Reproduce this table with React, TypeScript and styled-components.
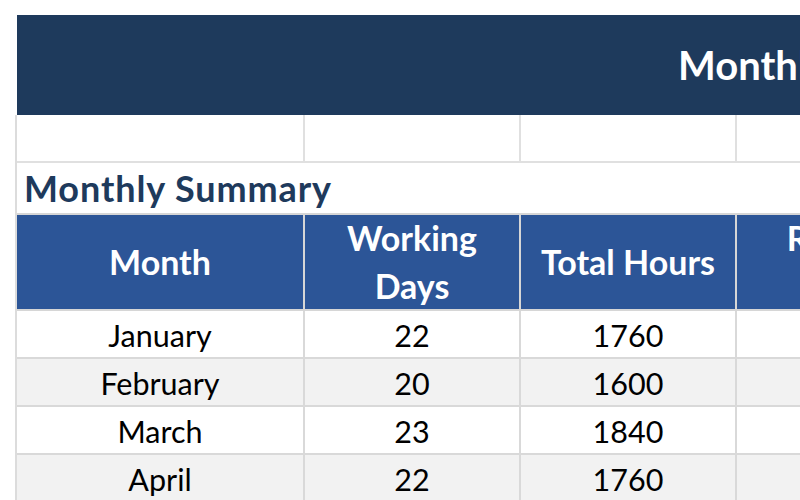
import React from "react";
import styled, { createGlobalStyle } from "styled-components";

const GlobalStyle = createGlobalStyle`
  html, body {
    margin: 0;
    padding: 0;
    background: #ffffff;
    overflow: hidden;
  }
  body {
    font-family: "Lato", "Liberation Sans", sans-serif;
  }
`;

const Page = styled.div`
  padding: 15px 0 0 15px;
  width: max-content;
`;

const TitleBar = styled.div`
  box-sizing: border-box;
  margin-left: 2px;
  height: 100px;
  width: 1400px;
  background: #1e3a5c;
  display: flex;
  align-items: center;
  padding-left: 661px;
  color: #ffffff;
  font-weight: 700;
  font-size: 40px;
  white-space: nowrap;
`;

const Sheet = styled.div`
  display: grid;
  grid-template-columns: 288px 216px 216px 216px 216px 216px;
  border-left: 2px solid #dcdcdc;
`;

const Cell = styled.div<{ $h: number; $bg?: string }>`
  box-sizing: border-box;
  height: ${(p) => p.$h}px;
  background: ${(p) => p.$bg ?? "#ffffff"};
  border-right: 2px solid #e0e0e0;
  border-bottom: 2px solid #e0e0e0;
`;

const SectionTitle = styled.div`
  grid-column: 1 / -1;
  box-sizing: border-box;
  height: 52px;
  border-bottom: 2px solid #d6d6d6;
  display: flex;
  align-items: center;
  padding-left: 7px;
  color: #1e3a5c;
  font-weight: 700;
  font-size: 36px;
  letter-spacing: 0.9px;
  white-space: nowrap;
`;

const HeaderCell = styled.div`
  box-sizing: border-box;
  height: 96px;
  background: #2c5597;
  border-right: 2px solid #d6d6d6;
  border-bottom: 2px solid #d6d6d6;
  display: flex;
  align-items: center;
  justify-content: center;
  text-align: center;
  color: #ffffff;
  font-weight: 700;
  font-size: 34px;
  line-height: 48px;
  white-space: pre-line;
`;

const DataCell = styled.div<{ $alt: boolean }>`
  box-sizing: border-box;
  height: 48px;
  background: ${(p) => (p.$alt ? "#f2f2f2" : "#ffffff")};
  border-right: 2px solid #d9d9d9;
  border-bottom: 2px solid #d9d9d9;
  display: flex;
  align-items: center;
  justify-content: center;
  padding-top: 1px;
  color: #000000;
  font-size: 30.5px;
  white-space: nowrap;
`;

const headers = [
  "Month",
  "Working\nDays",
  "Total Hours",
  "Regular\nHours",
  "Overtime\nHours",
  "Leave\nHours",
];

const rows = [
  ["January", "22", "1760", "1700", "60", "16"],
  ["February", "20", "1600", "1560", "40", "8"],
  ["March", "23", "1840", "1780", "60", "24"],
  ["April", "22", "1760", "1720", "40", "8"],
];

export default function App() {
  return (
    <>
      <GlobalStyle />
      <Page>
        <TitleBar>Monthly Timesheet Summary Report</TitleBar>
        <Sheet>
          {headers.map((_, i) => (
            <Cell key={`sp-${i}`} $h={48} />
          ))}
          <SectionTitle>Monthly Summary</SectionTitle>
          {headers.map((h) => (
            <HeaderCell key={h}>{h}</HeaderCell>
          ))}
          {rows.map((r, ri) =>
            r.map((v, ci) => (
              <DataCell key={`${ri}-${ci}`} $alt={ri % 2 === 1}>
                {v}
              </DataCell>
            ))
          )}
        </Sheet>
      </Page>
    </>
  );
}
